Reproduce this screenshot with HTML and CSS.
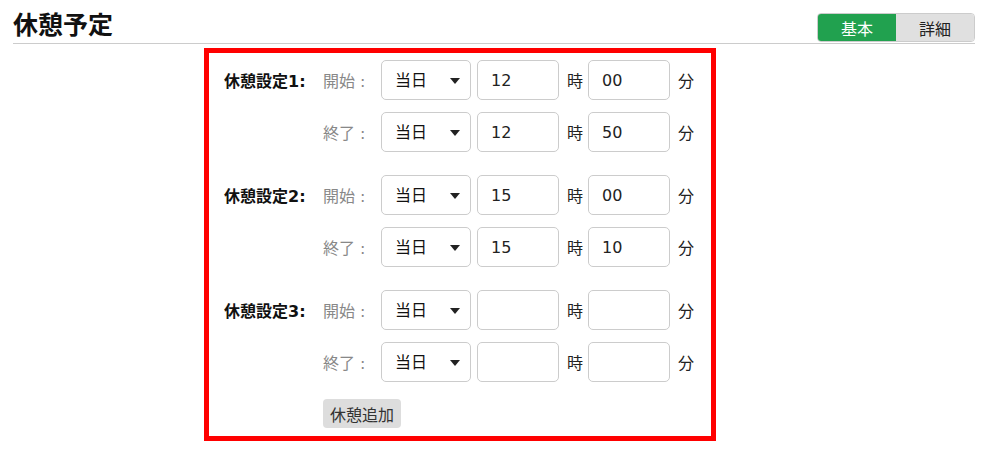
FILE: index.html
```html
<!DOCTYPE html>
<html lang="ja">
<head>
    <meta charset="UTF-8">
    <title>休憩予定</title>
    <link rel="stylesheet" href="styles.css">
</head>
<body>

<div class="header">
    <h1 class="title">休憩予定</h1>
    <div class="toggle">
        <button class="toggle-btn active">基本</button>
        <button class="toggle-btn">詳細</button>
    </div>
</div>

<div class="break-box">
    <div class="break-set">
        <div class="row">
            <span class="set-label">休憩設定1:</span>
            <span class="sub-label">開始 :</span>
            <div class="select-wrap"><select><option>当日</option><option>翌日</option></select></div>
            <input class="num" type="text" value="12">
            <span class="unit">時</span>
            <input class="num" type="text" value="00">
            <span class="unit">分</span>
        </div>
        <div class="row">
            <span class="set-label"></span>
            <span class="sub-label">終了 :</span>
            <div class="select-wrap"><select><option>当日</option><option>翌日</option></select></div>
            <input class="num" type="text" value="12">
            <span class="unit">時</span>
            <input class="num" type="text" value="50">
            <span class="unit">分</span>
        </div>
    </div>

    <div class="break-set">
        <div class="row">
            <span class="set-label">休憩設定2:</span>
            <span class="sub-label">開始 :</span>
            <div class="select-wrap"><select><option>当日</option><option>翌日</option></select></div>
            <input class="num" type="text" value="15">
            <span class="unit">時</span>
            <input class="num" type="text" value="00">
            <span class="unit">分</span>
        </div>
        <div class="row">
            <span class="set-label"></span>
            <span class="sub-label">終了 :</span>
            <div class="select-wrap"><select><option>当日</option><option>翌日</option></select></div>
            <input class="num" type="text" value="15">
            <span class="unit">時</span>
            <input class="num" type="text" value="10">
            <span class="unit">分</span>
        </div>
    </div>

    <div class="break-set">
        <div class="row">
            <span class="set-label">休憩設定3:</span>
            <span class="sub-label">開始 :</span>
            <div class="select-wrap"><select><option>当日</option><option>翌日</option></select></div>
            <input class="num" type="text" value="">
            <span class="unit">時</span>
            <input class="num" type="text" value="">
            <span class="unit">分</span>
        </div>
        <div class="row">
            <span class="set-label"></span>
            <span class="sub-label">終了 :</span>
            <div class="select-wrap"><select><option>当日</option><option>翌日</option></select></div>
            <input class="num" type="text" value="">
            <span class="unit">時</span>
            <input class="num" type="text" value="">
            <span class="unit">分</span>
        </div>
    </div>

    <div class="add-row">
        <button class="add-btn">休憩追加</button>
    </div>
</div>

</body>
</html>
```

FILE: styles.css
```css
body {
    margin: 0;
    background-color: #fff;
    font-family: "DejaVu Sans", "Noto Sans CJK JP", sans-serif;
    font-size: 16px;
    color: #222;
}
.header {
    display: flex;
    justify-content: space-between;
    align-items: flex-start;
    margin: 0 15px 0 13px;
    padding-top: 13px;
    height: 30px;
    border-bottom: 1px solid #ccc;
}
.title {
    margin: 0;
    font-size: 25px;
    line-height: 26px;
    font-weight: bold;
    color: #111;
}
.toggle {
    display: flex;
    height: 29px;
    border: 1px solid #ccc;
    border-radius: 4px;
    overflow: hidden;
    box-sizing: border-box;
}
.toggle-btn {
    width: 78px;
    border: none;
    background-color: #e0e0e0;
    font-family: inherit;
    font-size: 16px;
    color: #222;
    padding: 0;
}
.toggle-btn.active {
    background-color: #21a14f;
    color: #fff;
}
.break-box {
    margin: 4px 0 0 204px;
    width: 512px;
    height: 393px;
    box-sizing: border-box;
    border: 5px solid #f00;
    padding: 7px 0 0 15px;
}
.break-set {
    display: flex;
    flex-direction: column;
    gap: 12px;
    margin-bottom: 23px;
}
.row {
    display: flex;
    align-items: center;
    height: 40px;
}
.set-label {
    width: 99px;
    font-weight: bold;
    color: #111;
    white-space: nowrap;
}
.sub-label {
    width: 58px;
    color: #888;
    white-space: nowrap;
}
.select-wrap {
    position: relative;
    width: 90px;
    height: 40px;
}
.select-wrap select {
    appearance: none;
    -webkit-appearance: none;
    width: 100%;
    height: 100%;
    border: 1px solid #ccc;
    border-radius: 5px;
    background: #fff;
    padding: 0 0 0 13px;
    font-family: inherit;
    font-size: 16px;
    color: #111;
}
.select-wrap::after {
    content: "";
    position: absolute;
    right: 11px;
    top: 18px;
    border-left: 5px solid transparent;
    border-right: 5px solid transparent;
    border-top: 6px solid #222;
    pointer-events: none;
}
.num {
    width: 82px;
    height: 40px;
    box-sizing: border-box;
    margin-left: 6px;
    border: 1px solid #ccc;
    border-radius: 5px;
    padding: 0 13px;
    font-family: inherit;
    font-size: 16px;
    color: #222;
}
.unit {
    margin: 0 1px 0 8px;
    width: 14px;
    color: #222;
}
.add-row {
    padding-left: 99px;
    margin-top: -6px;
}
.add-btn {
    height: 29px;
    padding: 0 7px;
    border: none;
    border-radius: 4px;
    background-color: #ddd;
    font-family: inherit;
    font-size: 16px;
    color: #333;
}
```
